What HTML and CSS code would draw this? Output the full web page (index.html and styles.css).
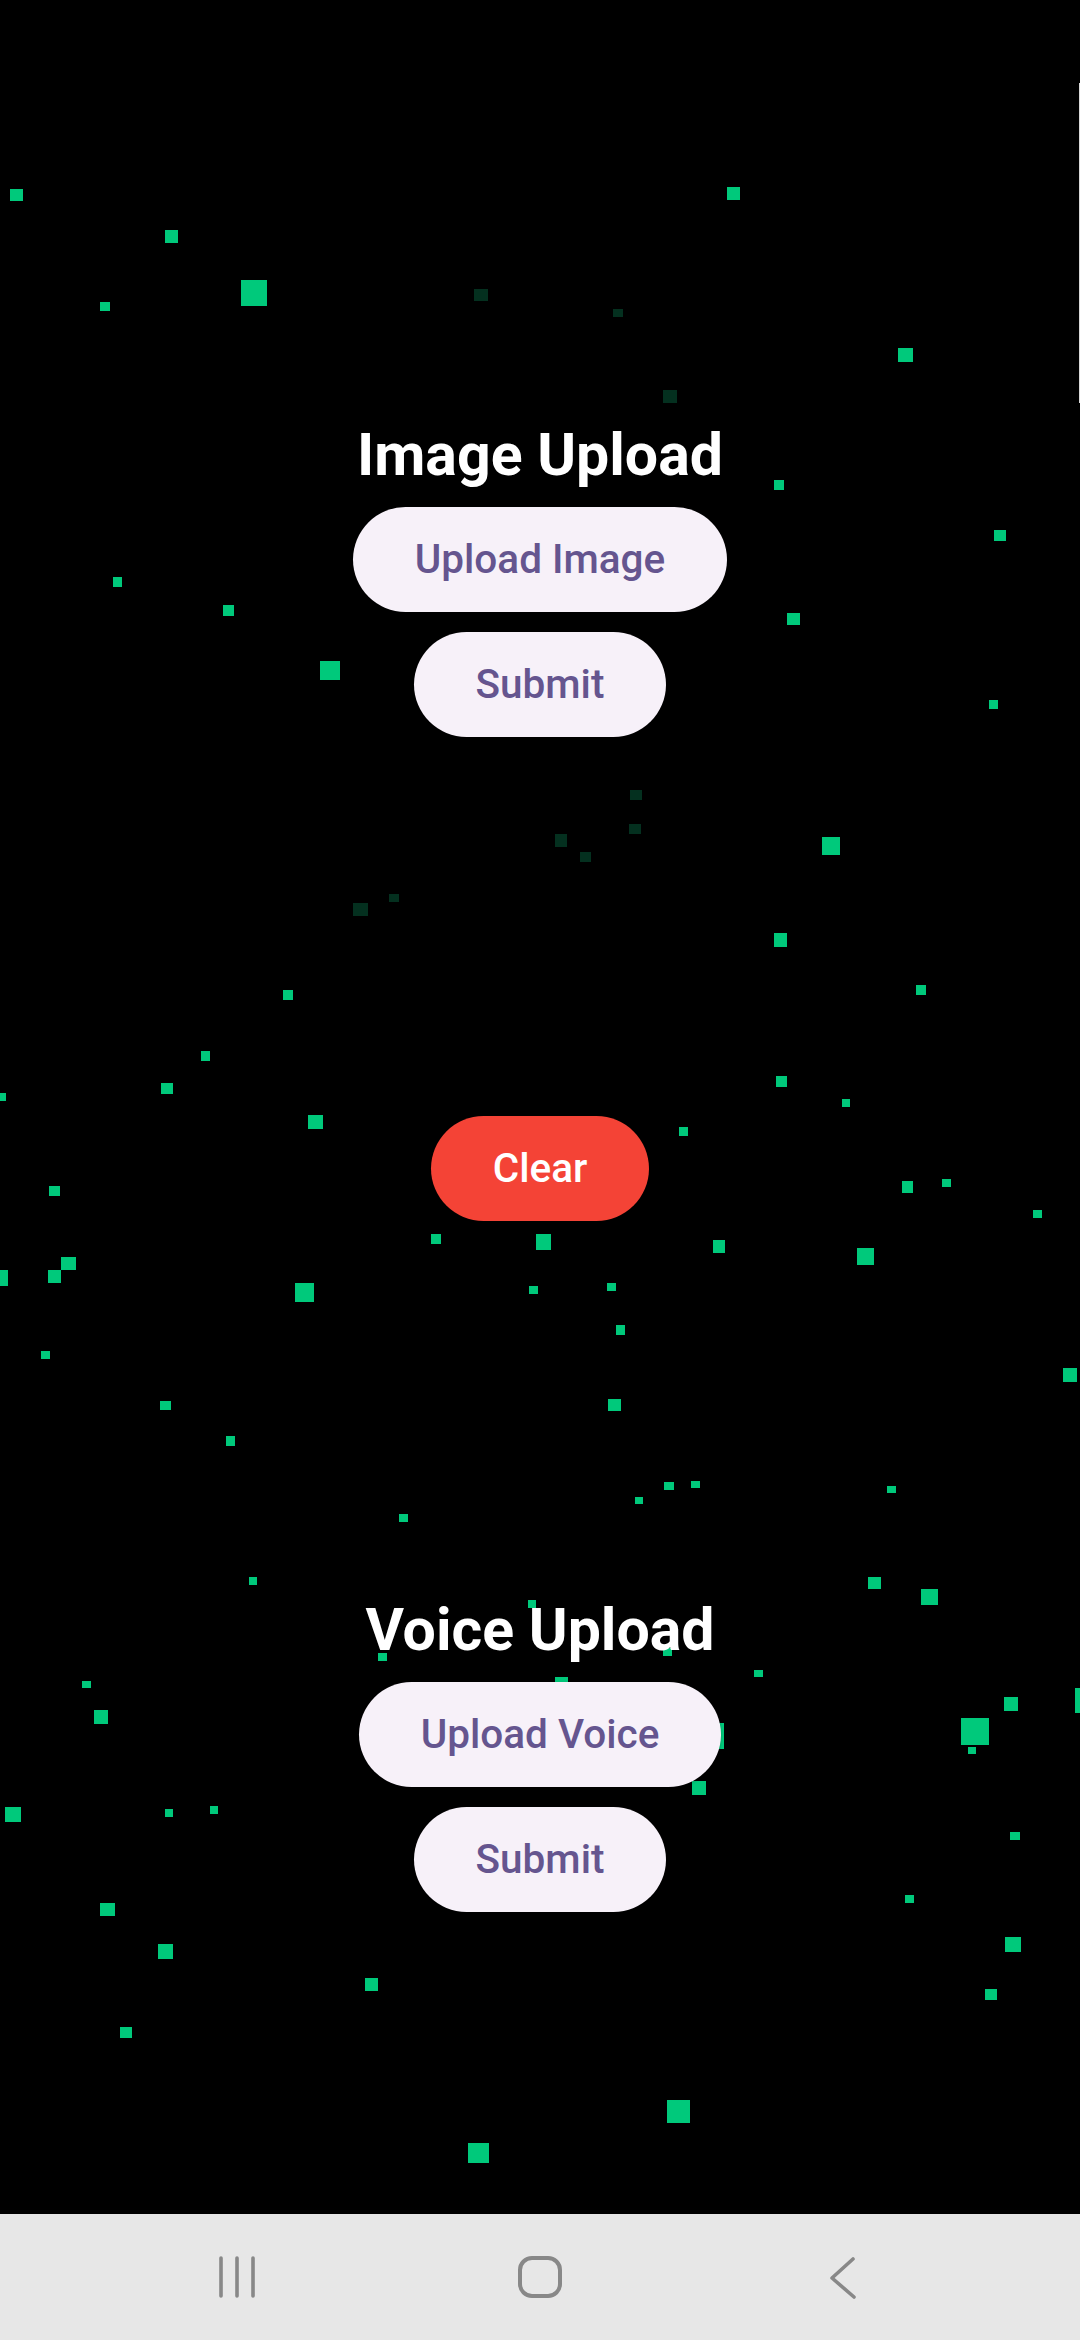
FILE: index.html
```html
<!DOCTYPE html>
<html lang="en">
<head>
<meta charset="utf-8">
<title>Upload</title>
<link rel="stylesheet" href="styles.css">
</head>
<body>
<div class="screen">
  <svg class="particles" width="1080" height="2214" viewBox="0 0 1080 2214" aria-hidden="true">
    <g class="dim">
      <rect x="474" y="289" width="14" height="12"/>
      <rect x="613" y="309" width="10" height="8"/>
      <rect x="663" y="390" width="14" height="13"/>
      <rect x="353" y="903" width="15" height="13"/>
      <rect x="389" y="894" width="10" height="8"/>
      <rect x="630" y="790" width="12" height="10"/>
      <rect x="629" y="824" width="12" height="10"/>
      <rect x="555" y="834" width="12" height="13"/>
      <rect x="580" y="852" width="11" height="10"/>
    </g>
    <g class="lit">
      <rect x="10" y="189" width="13" height="12"/>
      <rect x="165" y="230" width="13" height="13"/>
      <rect x="100" y="302" width="10" height="9"/>
      <rect x="241" y="280" width="26" height="26"/>
      <rect x="113" y="577" width="9" height="10"/>
      <rect x="223" y="605" width="11" height="11"/>
      <rect x="320" y="661" width="20" height="19"/>
      <rect x="727" y="187" width="13" height="13"/>
      <rect x="898" y="348" width="15" height="14"/>
      <rect x="774" y="480" width="10" height="10"/>
      <rect x="994" y="530" width="12" height="11"/>
      <rect x="787" y="613" width="13" height="12"/>
      <rect x="989" y="700" width="9" height="9"/>
      <rect x="283" y="990" width="10" height="10"/>
      <rect x="201" y="1051" width="9" height="10"/>
      <rect x="161" y="1083" width="12" height="11"/>
      <rect x="-2" y="1093" width="8" height="8"/>
      <rect x="308" y="1115" width="15" height="14"/>
      <rect x="49" y="1186" width="11" height="10"/>
      <rect x="61" y="1257" width="15" height="13"/>
      <rect x="48" y="1270" width="13" height="13"/>
      <rect x="-8" y="1270" width="16" height="16"/>
      <rect x="295" y="1283" width="19" height="19"/>
      <rect x="431" y="1234" width="10" height="10"/>
      <rect x="536" y="1234" width="15" height="16"/>
      <rect x="529" y="1286" width="9" height="8"/>
      <rect x="41" y="1351" width="9" height="8"/>
      <rect x="160" y="1401" width="11" height="9"/>
      <rect x="226" y="1436" width="9" height="10"/>
      <rect x="822" y="837" width="18" height="18"/>
      <rect x="774" y="933" width="13" height="14"/>
      <rect x="916" y="985" width="10" height="10"/>
      <rect x="776" y="1076" width="11" height="11"/>
      <rect x="842" y="1099" width="8" height="8"/>
      <rect x="679" y="1127" width="9" height="9"/>
      <rect x="902" y="1181" width="11" height="12"/>
      <rect x="942" y="1179" width="9" height="8"/>
      <rect x="1033" y="1210" width="9" height="8"/>
      <rect x="713" y="1240" width="12" height="13"/>
      <rect x="857" y="1248" width="17" height="17"/>
      <rect x="607" y="1283" width="9" height="8"/>
      <rect x="616" y="1325" width="9" height="10"/>
      <rect x="1063" y="1368" width="14" height="14"/>
      <rect x="608" y="1399" width="13" height="12"/>
      <rect x="399" y="1514" width="9" height="8"/>
      <rect x="249" y="1577" width="8" height="8"/>
      <rect x="528" y="1600" width="8" height="8"/>
      <rect x="378" y="1653" width="9" height="8"/>
      <rect x="82" y="1681" width="9" height="7"/>
      <rect x="94" y="1710" width="14" height="14"/>
      <rect x="5" y="1807" width="16" height="15"/>
      <rect x="165" y="1809" width="8" height="8"/>
      <rect x="210" y="1806" width="8" height="8"/>
      <rect x="100" y="1903" width="15" height="13"/>
      <rect x="158" y="1944" width="15" height="15"/>
      <rect x="365" y="1978" width="13" height="13"/>
      <rect x="120" y="2027" width="12" height="11"/>
      <rect x="468" y="2143" width="21" height="20"/>
      <rect x="635" y="1497" width="8" height="7"/>
      <rect x="664" y="1482" width="10" height="8"/>
      <rect x="691" y="1481" width="9" height="7"/>
      <rect x="887" y="1486" width="9" height="7"/>
      <rect x="868" y="1577" width="13" height="12"/>
      <rect x="921" y="1589" width="17" height="16"/>
      <rect x="663" y="1648" width="9" height="8"/>
      <rect x="754" y="1670" width="9" height="7"/>
      <rect x="555" y="1677" width="13" height="10"/>
      <rect x="1004" y="1697" width="14" height="14"/>
      <rect x="1075" y="1688" width="25" height="25"/>
      <rect x="961" y="1718" width="28" height="27"/>
      <rect x="968" y="1747" width="8" height="7"/>
      <rect x="700" y="1723" width="24" height="26"/>
      <rect x="692" y="1781" width="14" height="14"/>
      <rect x="1010" y="1832" width="10" height="8"/>
      <rect x="905" y="1895" width="9" height="8"/>
      <rect x="1005" y="1937" width="16" height="15"/>
      <rect x="985" y="1989" width="12" height="11"/>
      <rect x="667" y="2100" width="23" height="23"/>
    </g>
    <rect class="edge" x="1079" y="83" width="1" height="320"/>
  </svg>

  <main class="content">
    <section class="group">
      <h2 class="group-title">Image Upload</h2>
      <button class="pill pill-light" type="button">Upload Image</button>
      <button class="pill pill-light pill-gap" type="button">Submit</button>
    </section>

    <div class="clear-row">
      <button class="pill pill-danger" type="button">Clear</button>
    </div>

    <section class="group group-voice">
      <h2 class="group-title">Voice Upload</h2>
      <button class="pill pill-light" type="button">Upload Voice</button>
      <button class="pill pill-light pill-gap" type="button">Submit</button>
    </section>
  </main>

  <nav class="navbar" aria-label="System navigation">
    <span class="nav-icon" aria-label="Recent apps">
      <svg width="60" height="60" viewBox="0 0 60 60">
        <path d="M14 11V49M30 11V49M46 11V49" fill="none" stroke="#888888" stroke-width="3.6" stroke-linecap="round"/>
      </svg>
    </span>
    <span class="nav-icon" aria-label="Home">
      <svg width="60" height="60" viewBox="0 0 60 60">
        <rect x="10" y="11" width="40" height="38" rx="12" ry="12" fill="none" stroke="#888888" stroke-width="4"/>
      </svg>
    </span>
    <span class="nav-icon" aria-label="Back">
      <svg width="60" height="60" viewBox="0 0 60 60">
        <polyline points="40,12 19,31 41,50" fill="none" stroke="#888888" stroke-width="3.6" stroke-linecap="round" stroke-linejoin="round"/>
      </svg>
    </span>
  </nav>
</div>
</body>
</html>
```

FILE: styles.css
```css
html, body {
  margin: 0;
  padding: 0;
  background: #000000;
}

body {
  font-family: Roboto, "Noto Sans", "Liberation Sans", sans-serif;
}

.screen {
  position: relative;
  width: 1080px;
  height: 2340px;
  overflow: hidden;
  background: #000000;
  display: flex;
  flex-direction: column;
}

.particles {
  position: absolute;
  left: 0;
  top: 0;
  z-index: 0;
}

.particles .lit {
  fill: #00c97b;
}

.particles .dim {
  fill: #04301f;
}

.particles .edge {
  fill: #d8d8d8;
}

.content {
  position: relative;
  z-index: 1;
  height: 2214px;
  box-sizing: border-box;
  padding-top: 420px;
  display: flex;
  flex-direction: column;
  align-items: center;
}

.group {
  display: flex;
  flex-direction: column;
  align-items: center;
}

.group-voice {
  margin-top: 374px;
}

.group-title {
  margin: 0 0 18px 0;
  font-size: 59px;
  line-height: 69px;
  font-weight: 700;
  color: #ffffff;
  letter-spacing: 0;
}

.pill {
  height: 105px;
  padding: 0 62px;
  border: none;
  border-radius: 999px;
  font-family: Roboto, "Noto Sans", "Liberation Sans", sans-serif;
  font-size: 40.5px;
  font-weight: 500;
  line-height: 47px;
  display: inline-flex;
  align-items: center;
  justify-content: center;
  white-space: nowrap;
}

.pill-light {
  background: #f7f1f9;
  color: #65558f;
  box-shadow: 0 1px 3px rgba(0, 0, 0, 0.3);
}

.pill-gap {
  margin-top: 20px;
}

.clear-row {
  margin-top: 379px;
  display: flex;
  justify-content: center;
}

.pill-danger {
  background: #f44336;
  color: #ffffff;
}

.navbar {
  position: relative;
  z-index: 1;
  height: 126px;
  background: #e7e7e7;
  display: flex;
  align-items: center;
  justify-content: center;
  gap: 243px;
}

.nav-icon {
  width: 60px;
  height: 60px;
  display: block;
}

.nav-icon svg {
  display: block;
}
```
